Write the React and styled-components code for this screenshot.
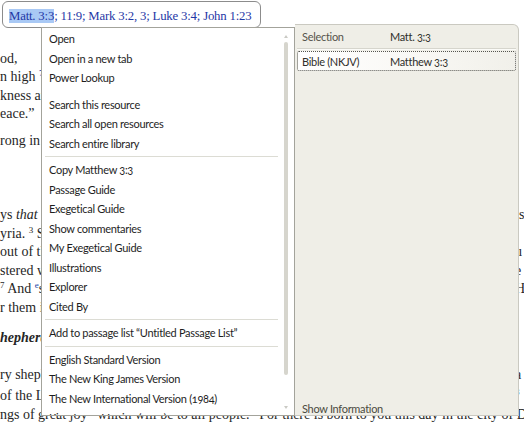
import React from "react";
import styled, { createGlobalStyle } from "styled-components";

const GlobalStyle = createGlobalStyle`
  html, body { margin: 0; padding: 0; background: #fff; overflow: hidden; }
  #root { width: 524px; height: 428px; overflow: hidden; }
`;

const Stage = styled.div`
  position: relative;
  width: 524px;
  height: 428px;
  overflow: hidden;
  background: #fff;
`;

/* ---------- background document ---------- */
const Doc = styled.div`
  padding-top: 49.5px;
  font-family: "Liberation Serif", "Times New Roman", serif;
  font-size: 14px;
  line-height: 18.5px;
  color: #262626;
`;

const Line = styled.div`
  display: flex;
  width: 524px;
  margin-top: ${(p) => p.$gap || 0}px;
  white-space: nowrap;
`;

const Left = styled.span`
  flex: ${(p) => (p.$wide ? "0 0 auto" : "1 1 0")};
  min-width: 0;
  overflow: ${(p) => (p.$wide ? "visible" : "hidden")};
  font-style: ${(p) => (p.$heading ? "italic" : "normal")};
  font-weight: ${(p) => (p.$heading ? 700 : 400)};
`;

const Right = styled.span`
  flex: 0 0 9px;
  width: 9px;
`;

const Sup = styled.sup`
  font-size: 9px;
  line-height: 0;
  vertical-align: 5px;
  color: ${(p) => (p.$blue ? "#2343a8" : "inherit")};
`;

/* ---------- tooltip with references ---------- */
const Tip = styled.div`
  position: absolute;
  left: 2px;
  top: 1px;
  width: 259px;
  height: 27px;
  box-sizing: border-box;
  border: 1px solid #8c8c8c;
  border-radius: 6px;
  background: #fff;
  padding: 4px 0 0 6px;
  font-family: "Liberation Serif", "Times New Roman", serif;
  font-size: 12.8px;
  letter-spacing: -0.2px;
  line-height: 21px;
  color: #1f38a6;
  white-space: nowrap;
`;

const Hl = styled.span`
  background: #a9c9f5;
`;

/* ---------- popup: menu + info panel ---------- */
const Popup = styled.div`
  position: absolute;
  left: 41px;
  top: 24px;
  width: 478px;
  height: 392px;
  display: flex;
  align-items: stretch;
  font-family: Lato, "Liberation Sans", Arial, sans-serif;
  font-size: 11px;
  letter-spacing: -0.3px;
`;

const Menu = styled.div`
  margin-top: 3px;
  width: 254px;
  box-sizing: border-box;
  border: 1px solid #a3a39b;
  background: #fff;
  display: flex;
  overflow: hidden;
`;

const List = styled.div`
  flex: 1;
  min-width: 0;
  padding-top: 1px;
  display: flex;
  flex-direction: column;
`;

const Item = styled.div`
  flex: 0 0 19.5px;
  height: 19.5px;
  line-height: 19.5px;
  padding-left: 7px;
  color: #1e1e1e;
  white-space: nowrap;
  font-variant-numeric: oldstyle-nums;
`;

const Sep = styled.div`
  flex: 0 0 7px;
  margin: 0 3px;
  display: flex;
  align-items: center;
  &::after {
    content: "";
    flex: 1;
    height: 1px;
    background: ${(p) => (p.$blank ? "transparent" : "#dcdcd4")};
  }
`;

const Scroll = styled.div`
  flex: 0 0 10px;
  margin-right: 3px;
  display: flex;
  flex-direction: column;
  align-items: center;
  padding: 7px 0 6px;
`;

const Arrow = styled.div`
  width: 0;
  height: 0;
  border-left: 2.5px solid transparent;
  border-right: 2.5px solid transparent;
  ${(p) =>
    p.$down
      ? "border-top: 3px solid #cacac4; margin-top: auto;"
      : "border-bottom: 3px solid #cacac4;"}
`;

const Thumb = styled.div`
  width: 4px;
  height: 333px;
  margin-top: 4px;
  background: #d6d5cd;
  border-radius: 2px;
`;

const Panel = styled.div`
  flex: 1;
  box-sizing: border-box;
  background: #efeee7;
  border: 1px solid #cac9c1;
  border-left: none;
  border-top-right-radius: 6px;
  display: flex;
  flex-direction: column;
  color: #3a3a33;
`;

const InfoRow = styled.div`
  display: grid;
  grid-template-columns: 88px 1fr;
  align-items: center;
  height: 23px;
  padding-left: 7px;
  white-space: nowrap;
  font-variant-numeric: oldstyle-nums;
`;

const Label = styled.span`
  color: ${(p) => (p.$muted ? "#55544b" : "#2e2e2a")};
`;

const Divider = styled.div`
  margin: 0 2px;
  height: 1px;
  border-top: 1px solid #d6d5cd;
  background: #fbfbf8;
`;

const Selected = styled.div`
  margin: 1px 2px 0;
  height: 20px;
  box-sizing: border-box;
  border: 1px dotted #55554f;
  border-radius: 2px;
  background: linear-gradient(to right, #ffffff 0%, #f8f7f3 60%, #f1f0ea 100%);
  display: grid;
  grid-template-columns: 88px 1fr;
  align-items: center;
  padding-left: 4px;
  white-space: nowrap;
  font-variant-numeric: oldstyle-nums;
  color: #2e2e2a;
`;

const Footer = styled.div`
  margin-top: auto;
  height: 13px;
  line-height: 13px;
  padding-left: 7px;
  color: #4b4a40;
`;

const menuGroups = [
  { blank: false, items: ["Open", "Open in a new tab", "Power Lookup"] },
  {
    blank: true,
    items: ["Search this resource", "Search all open resources", "Search entire library"],
  },
  {
    blank: false,
    items: [
      "Copy Matthew 3:3",
      "Passage Guide",
      "Exegetical Guide",
      "Show commentaries",
      "My Exegetical Guide",
      "Illustrations",
      "Explorer",
      "Cited By",
    ],
  },
  { blank: false, items: ["Add to passage list \u201CUntitled Passage List\u201D"] },
  {
    blank: false,
    items: [
      "English Standard Version",
      "The New King James Version",
      "The New International Version (1984)",
      "King James Version (1900)",
    ],
  },
];

export default function App() {
  return (
    <Stage>
      <GlobalStyle />
      <Doc>
        <Line>
          <Left>od,</Left>
        </Line>
        <Line>
          <Left>
            n high <Sup $blue>79</Sup>To give light
          </Left>
        </Line>
        <Line>
          <Left>kness and the shadow of death,</Left>
        </Line>
        <Line>
          <Left>eace.&rdquo;</Left>
        </Line>
        <Line $gap={8}>
          <Left>rong in spirit, and was in the deserts</Left>
        </Line>
        <Line $gap={56}>
          <Left>
            ys <i>that</i> a decree went out from Caesar Augustus that all the world
          </Left>
          <Right>is</Right>
        </Line>
        <Line>
          <Left>
            yria. <Sup>3</Sup> So all went to be registered, everyone to his own city.
          </Left>
          <Right />
        </Line>
        <Line>
          <Left>out of the city of Nazareth, into Judea, to the city of David</Left>
          <Right>u</Right>
        </Line>
        <Line>
          <Left>stered with Mary, his betrothed wife, who was with child.</Left>
          <Right>e</Right>
        </Line>
        <Line>
          <Left>
            <Sup>7</Sup> And <Sup $blue>e</Sup>she brought forth her firstborn Son, and wrapped
          </Left>
          <Right>H</Right>
        </Line>
        <Line>
          <Left>r them in the inn.</Left>
        </Line>
        <Line $gap={12}>
          <Left $heading>hepherds and the Angels</Left>
        </Line>
        <Line $gap={18.5}>
          <Left>ry shepherds living out in the fields, keeping watch over their flock</Left>
          <Right>a</Right>
        </Line>
        <Line $gap={2}>
          <Left>of the Lord shone around them, and they were greatly afraid.</Left>
          <Right>
            <Sup $blue>8</Sup>
          </Right>
        </Line>
        <Line $gap={1}>
          <Left $wide>
            ngs of great joy&rdquo; which will be to all people.&rdquo; For there is born to you this
            day in the city of David
          </Left>
        </Line>
      </Doc>

      <Tip>
        <Hl>Matt. 3:3</Hl>; 11:9; Mark 3:2, 3; Luke 3:4; John 1:23
      </Tip>

      <Popup>
        <Menu>
          <List>
            {menuGroups.map((g, gi) => (
              <React.Fragment key={gi}>
                {gi > 0 && <Sep $blank={g.blank} />}
                {g.items.map((it) => (
                  <Item key={it}>{it}</Item>
                ))}
              </React.Fragment>
            ))}
          </List>
          <Scroll>
            <Arrow />
            <Thumb />
            <Arrow $down />
          </Scroll>
        </Menu>
        <Panel>
          <InfoRow>
            <Label $muted>Selection</Label>
            <Label>Matt. 3:3</Label>
          </InfoRow>
          <Divider />
          <Selected>
            <Label>Bible (NKJV)</Label>
            <Label>Matthew 3:3</Label>
          </Selected>
          <Footer>Show Information</Footer>
        </Panel>
      </Popup>
    </Stage>
  );
}
